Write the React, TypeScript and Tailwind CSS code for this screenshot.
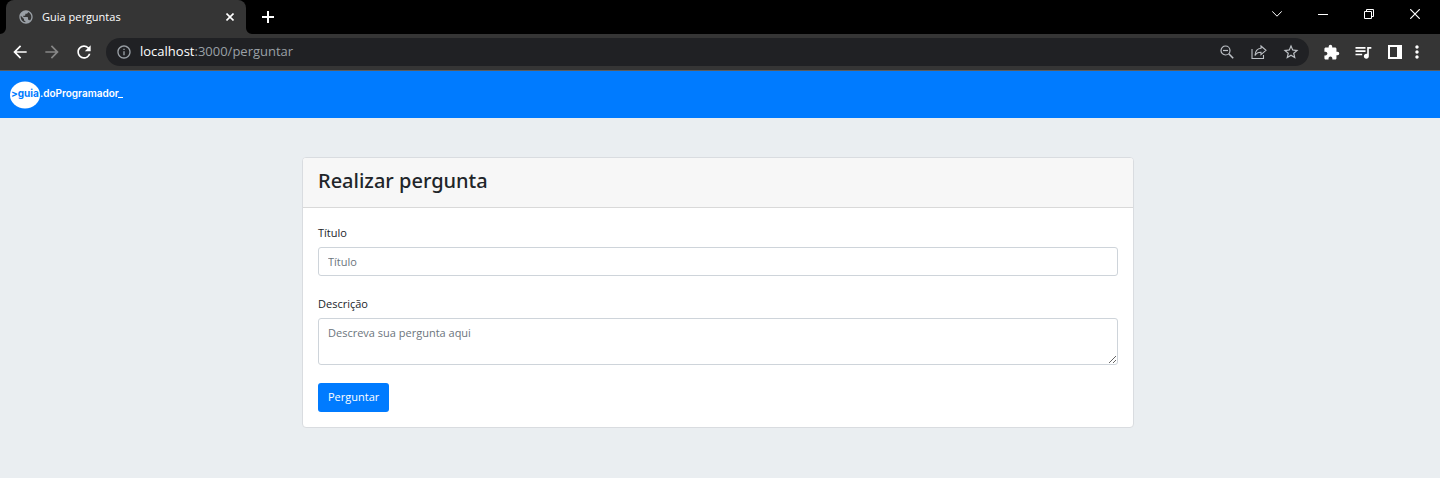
import type { ReactNode } from "react";
import {
  MdArrowBack,
  MdArrowForward,
  MdRefresh,
  MdPublic,
  MdExtension,
  MdQueueMusic,
  MdMoreVert,
  MdStarOutline,
  MdOutlineInfo,
} from "react-icons/md";

function IconButton({ label, className = "", children }: { label: string; className?: string; children: ReactNode }) {
  return (
    <button type="button" aria-label={label} className={`flex h-5 w-5 shrink-0 items-center justify-center ${className}`}>
      {children}
    </button>
  );
}

function TabStrip() {
  return (
    <div className="flex h-[34px] items-end bg-black">
      <svg width="6" height="6" viewBox="0 0 6 6" className="shrink-0 text-[#353535]" aria-hidden="true">
        <path d="M6 0v6H0a6 6 0 0 0 6-6z" fill="currentColor" />
      </svg>
      <div className="flex h-[34px] w-60 items-center rounded-t-lg bg-[#353535] pl-3 pr-1.5 text-white">
        <MdPublic className="mr-2 h-4 w-4 shrink-0 text-[#9aa0a6]" />
        <span className="flex-1 text-[11px]">Guia perguntas</span>
        <IconButton label="Fechar guia">
          <svg width="8" height="8" viewBox="0 0 8 8" stroke="currentColor" strokeWidth="1.6">
            <path d="M.5.5l7 7M7.500.5l-7 7" />
          </svg>
        </IconButton>
      </div>
      <svg width="6" height="6" viewBox="0 0 6 6" className="shrink-0 text-[#353535]" aria-hidden="true">
        <path d="M0 0v6h6a6 6 0 0 1-6-6z" fill="currentColor" />
      </svg>
      <div className="flex h-full items-center pl-1.5 text-white">
        <IconButton label="Nova guia">
          <svg width="12" height="12" viewBox="0 0 12 12" fill="currentColor">
            <path d="M5 0h2v5h5v2H7v5H5V7H0V5h5z" />
          </svg>
        </IconButton>
      </div>
      <div className="ml-auto flex h-7 items-center gap-[26px] self-start pr-[15px] text-white">
        <IconButton label="Pesquisar guias">
          <svg width="10" height="6" viewBox="0 0 10 6" fill="none" stroke="currentColor">
            <path d="M.2.3L5 5.200 9.800.3" />
          </svg>
        </IconButton>
        <IconButton label="Minimizar">
          <svg width="10" height="10" viewBox="0 0 10 10" fill="currentColor">
            <path d="M0 5h10v1H0z" />
          </svg>
        </IconButton>
        <IconButton label="Restaurar">
          <svg width="10" height="10" viewBox="0 0 10 10" fill="none" stroke="currentColor">
            <path d="M.5 2.500h7v7h-7zM2.500 2.500v-2h7v7h-2" />
          </svg>
        </IconButton>
        <IconButton label="Fechar">
          <svg width="10" height="10" viewBox="0 0 10 10" stroke="currentColor" strokeWidth="1.2">
            <path d="M.2.2l9.600 9.600M9.800.2L.2 9.800" />
          </svg>
        </IconButton>
      </div>
    </div>
  );
}

function Toolbar() {
  return (
    <div className="flex h-[37px] items-center border-b border-[#5c5c5c] bg-[#353535] pl-2.5 pr-[13px] text-white">
      <div className="flex gap-3">
        <IconButton label="Voltar"><MdArrowBack className="h-5 w-5" /></IconButton>
        <IconButton label="Avançar" className="text-[#878787]"><MdArrowForward className="h-5 w-5" /></IconButton>
        <IconButton label="Recarregar"><MdRefresh className="h-5 w-5" /></IconButton>
      </div>
      <div className="ml-3 flex h-7 flex-1 items-center rounded-full bg-[#202124] pl-2.5 pr-2">
        <MdOutlineInfo className="mr-2 h-4 w-4 shrink-0 text-[#9aa0a6]" />
        <span className="flex-1 text-[13px] text-[#9aa0a6]">
          <span className="text-white">localhost</span>:3000/perguntar
        </span>
        <div className="flex gap-3 text-[#bdc1c6]">
          <IconButton label="Zoom">
            <svg width="14" height="14" viewBox="0 0 14 14" fill="none" stroke="currentColor" strokeWidth="1.2">
              <circle cx="5.500" cy="5.500" r="4.500" />
              <path d="M3 5.500h5" />
              <path d="M8.800 8.800l4.400 4.400" strokeWidth="1.6" />
            </svg>
          </IconButton>
          <IconButton label="Compartilhar">
            <svg width="16" height="16" viewBox="0 0 16 16" fill="none" stroke="currentColor" strokeWidth="1.1">
              <path d="M1 5v9.500h11.500V11" />
              <path d="M10 2l5 4.300-5 4.300V8.300C7.300 8.200 5.300 9.200 4 11.500 4.200 7.400 6.200 4.700 10 4.300z" />
            </svg>
          </IconButton>
          <IconButton label="Favoritar"><MdStarOutline className="h-[18px] w-[18px]" /></IconButton>
        </div>
      </div>
      <div className="ml-3 mr-0.5 flex gap-3">
        <IconButton label="Extensões"><MdExtension className="h-[17px] w-[17px]" /></IconButton>
        <IconButton label="Controles de mídia"><MdQueueMusic className="h-5 w-5" /></IconButton>
        <IconButton label="Painel lateral">
          <svg width="14" height="14" viewBox="0 0 14 14" fill="currentColor" fillRule="evenodd">
            <path d="M0 0h14v14H0zM2 2v10h7V2z" />
          </svg>
        </IconButton>
      </div>
      <IconButton label="Menu"><MdMoreVert className="h-5 w-5" /></IconButton>
    </div>
  );
}

function Logo() {
  return (
    <svg width="116" height="28" viewBox="0 0 116 28" role="img" aria-label="guia.doProgramador" className="font-['Inter','Open_Sans',sans-serif]">
      <ellipse cx="15" cy="14" rx="15" ry="13.500" fill="#fff" />
      <text x="1" y="16" fontSize="10" fontWeight="700" fill="#007bff">&gt;guia</text>
      <text x="30" y="16" fontSize="10" fontWeight="600" fill="#fff">.doProgramador</text>
      <path d="M108 16.500h5" stroke="#fff" />
    </svg>
  );
}

const field =
  "block w-full rounded-[3px] border border-[#ced4da] bg-white px-[9px] text-[11px] text-[#495057] placeholder:text-[#6c757d] placeholder:opacity-100";

export default function App() {
  return (
    <div className="flex min-h-screen flex-col bg-[#eaeef1] font-['Open_Sans','Noto_Sans',sans-serif] text-[#212529]">
      <TabStrip />
      <Toolbar />
      <nav className="flex h-[47px] items-center bg-[#007bff] px-2.5">
        <a href="/"><Logo /></a>
      </nav>
      <main className="py-[39px] pr-1">
        <section className="mx-auto w-full max-w-[832px] rounded-[4px] border border-[#d9dce0] bg-white">
          <header className="h-[50px] rounded-t-[3px] border-b border-[#d9d9d9] bg-[#f7f7f7] px-[15px] pt-[10px]">
            <h1 className="font-['Noto_Sans','Open_Sans',sans-serif] text-xl leading-[26px] font-medium">Realizar pergunta</h1>
          </header>
          <form className="px-[15px] pt-4 pb-[15px]">
            <label htmlFor="titulo" className="mb-[5px] block text-[11px] leading-[18px]">Título</label>
            <input id="titulo" type="text" placeholder="Título" className={`${field} h-[29px]`} />
            <label htmlFor="descricao" className="mt-[19px] mb-[5px] block text-[11px] leading-[18px]">Descrição</label>
            <textarea id="descricao" placeholder="Descreva sua pergunta aqui" className={`${field} h-[47px] resize-y py-[5px] leading-[18px]`} />
            <button type="submit" className="mt-[18px] block h-[29px] rounded-[3px] bg-[#007bff] px-[10px] text-[11px] text-white">Perguntar</button>
          </form>
        </section>
      </main>
    </div>
  );
}
